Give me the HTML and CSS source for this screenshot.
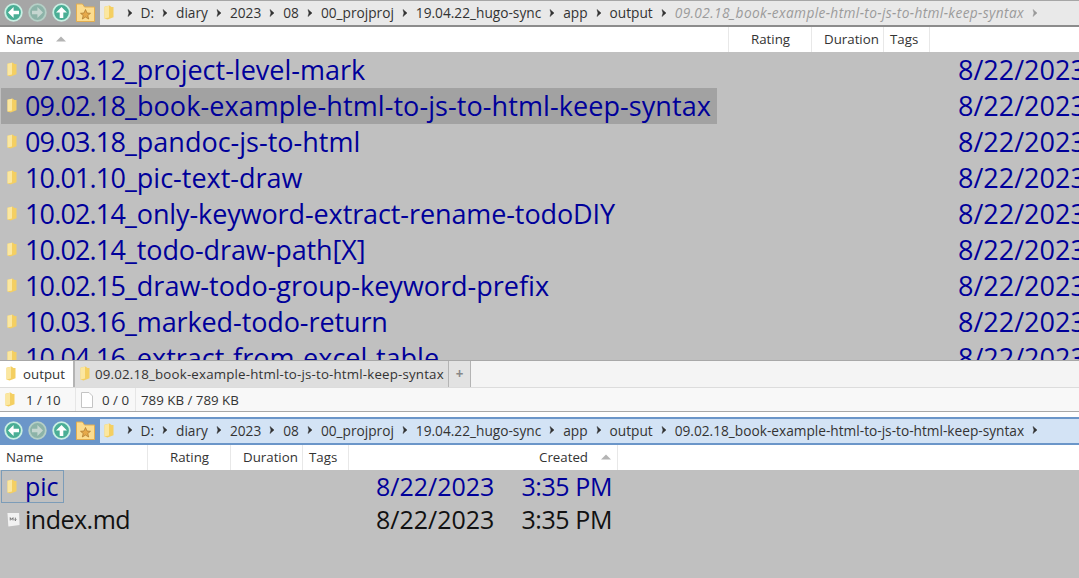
FILE: index.html
```html
<!DOCTYPE html>
<html lang="en">
<head>
<meta charset="utf-8">
<title>Explorer</title>
<link rel="stylesheet" href="styles.css">
</head>
<body>
<svg class="defs" width="0" height="0" aria-hidden="true">
  <defs>
    <symbol id="folder" viewBox="0 0 10 15">
      <path d="M.5 1.8 L5.5 .6 L7.5 2 L9.5 2 L9.5 12.2 L3.5 14.6 L.5 13.4 Z" fill="#f4cf62"/>
      <path d="M.5 1.8 L5 .8 L5 12.6 L.5 13.4 Z" fill="#fbe7a0"/>
    </symbol>
    <symbol id="arrow-left" viewBox="0 0 19 19">
      <circle cx="9.5" cy="9.5" r="8.3" fill="#4aae95" stroke="#c9efe3" stroke-width="1.8"/>
      <path d="M15 7.7 H9.6 V4 L4 9.5 L9.6 15 V11.3 H15 Z" fill="#fff"/>
    </symbol>
    <symbol id="arrow-right" viewBox="0 0 19 19">
      <circle cx="9.5" cy="9.5" r="8.3" fill="#8cb3a8" stroke="#b5cfc6" stroke-width="1.8"/>
      <path d="M4 7.7 H9.4 V4 L15 9.5 L9.4 15 V11.3 H4 Z" fill="#c5d6d0"/>
    </symbol>
    <symbol id="arrow-up" viewBox="0 0 19 19">
      <circle cx="9.5" cy="9.5" r="8.3" fill="#4aae95" stroke="#c9efe3" stroke-width="1.8"/>
      <path d="M7.7 15 V9.6 H4 L9.5 4 L15 9.6 H11.3 V15 Z" fill="#fff"/>
    </symbol>
    <symbol id="fav" viewBox="0 0 19 19">
      <path d="M.5 1 H6.5 L8.5 4 H18.5 V18.5 H.5 Z" fill="#fcdc8e" stroke="#e2ad50"/>
      <path d="M9.5 6.5 L11 10 L14.5 10.3 L11.8 12.5 L12.7 16 L9.5 14.1 L6.3 16 L7.2 12.5 L4.5 10.3 L8 10 Z" fill="#e6a94a" stroke="#a9762c" stroke-width=".7"/>
    </symbol>
    <symbol id="sep" viewBox="0 0 8 10">
      <path d="M2 1.5 L6 5 L2 8.5 L3 5 Z" fill="currentColor" stroke="currentColor" stroke-width=".5"/>
    </symbol>
    <symbol id="sort" viewBox="0 0 10 6">
      <path d="M0 5.5 L5 .5 L10 5.5 Z" fill="#b4b4b4"/>
    </symbol>
    <symbol id="doc" viewBox="0 0 12 16">
      <path d="M.5 .5 H8 L11.5 4 V15.5 H.5 Z" fill="#fff" stroke="#c4c4c4"/>
    </symbol>
    <symbol id="md" viewBox="0 0 14 16">
      <path d="M.5 1 H13 L13.5 14 L1.5 15.5 Z" fill="#f2f2f2"/>
      <path d="M3.5 9 V6 L5 8 L6.5 6 V9 M9 6 V9 M7.8 8 L9 9.2 L10.2 8" fill="none" stroke="#666" stroke-width=".9"/>
    </symbol>
  </defs>
</svg>

<section class="pane">
  <div class="toolbar toolbar-inactive">
    <div class="nav">
      <svg class="nav-icon"><use href="#arrow-left"/></svg>
      <svg class="nav-icon"><use href="#arrow-right"/></svg>
      <svg class="nav-icon"><use href="#arrow-up"/></svg>
      <svg class="fav-icon"><use href="#fav"/></svg>
    </div>
    <div class="crumbs crumbs-inactive">
      <svg class="crumb-folder"><use href="#folder"/></svg>
      <svg class="sep"><use href="#sep"/></svg><span>D:</span>
      <svg class="sep"><use href="#sep"/></svg><span>diary</span>
      <svg class="sep"><use href="#sep"/></svg><span>2023</span>
      <svg class="sep"><use href="#sep"/></svg><span>08</span>
      <svg class="sep"><use href="#sep"/></svg><span>00_projproj</span>
      <svg class="sep"><use href="#sep"/></svg><span>19.04.22_hugo-sync</span>
      <svg class="sep"><use href="#sep"/></svg><span>app</span>
      <svg class="sep"><use href="#sep"/></svg><span>output</span>
      <svg class="sep"><use href="#sep"/></svg><span class="crumb-ghost">09.02.18_book-example-html-to-js-to-html-keep-syntax</span>
      <svg class="sep sep-ghost"><use href="#sep"/></svg>
    </div>
  </div>

  <div class="header header-top">
    <div class="hcell hcell-name-top"><span>Name</span><svg class="sort"><use href="#sort"/></svg></div>
    <div class="hcell hcell-rating-top">Rating</div>
    <div class="hcell hcell-duration-top">Duration</div>
    <div class="hcell hcell-tags-top">Tags</div>
  </div>

  <div class="list list-top">
    <div class="row"><div class="name"><svg class="row-icon"><use href="#folder"/></svg><span class="label"><span class="num">07.03.12</span>_project-level-mark</span></div><div class="date">8/22/2023</div></div>
    <div class="row"><div class="name name-selected"><svg class="row-icon"><use href="#folder"/></svg><span class="label label-loose"><span class="num">09.02.18</span>_book-example-html-to-js-to-html-keep-syntax</span></div><div class="date">8/22/2023</div></div>
    <div class="row"><div class="name"><svg class="row-icon"><use href="#folder"/></svg><span class="label"><span class="num">09.03.18</span>_pandoc-js-to-html</span></div><div class="date">8/22/2023</div></div>
    <div class="row"><div class="name"><svg class="row-icon"><use href="#folder"/></svg><span class="label"><span class="num">10.01.10</span>_pic-text-draw</span></div><div class="date">8/22/2023</div></div>
    <div class="row"><div class="name"><svg class="row-icon"><use href="#folder"/></svg><span class="label label-tight"><span class="num">10.02.14</span>_only-keyword-extract-rename-todoDIY</span></div><div class="date">8/22/2023</div></div>
    <div class="row"><div class="name"><svg class="row-icon"><use href="#folder"/></svg><span class="label label-tight"><span class="num">10.02.14</span>_todo-draw-path[X]</span></div><div class="date">8/22/2023</div></div>
    <div class="row"><div class="name"><svg class="row-icon"><use href="#folder"/></svg><span class="label"><span class="num">10.02.15</span>_draw-todo-group-keyword-prefix</span></div><div class="date">8/22/2023</div></div>
    <div class="row"><div class="name"><svg class="row-icon"><use href="#folder"/></svg><span class="label label-tight"><span class="num">10.03.16</span>_marked-todo-return</span></div><div class="date">8/22/2023</div></div>
    <div class="row"><div class="name"><svg class="row-icon"><use href="#folder"/></svg><span class="label"><span class="num">10.04.16</span>_extract-from-excel-table</span></div><div class="date">8/22/2023</div></div>
  </div>

  <div class="tabs">
    <div class="tab tab-active"><svg class="tab-icon"><use href="#folder"/></svg><span>output</span></div>
    <div class="tab tab-path"><svg class="tab-icon"><use href="#folder"/></svg><span>09.02.18_book-example-html-to-js-to-html-keep-syntax</span></div>
    <div class="tab tab-add">+</div>
  </div>

  <div class="status">
    <div class="stat stat-folders"><svg class="tab-icon"><use href="#folder"/></svg><span>1 / 10</span></div>
    <div class="stat stat-files"><svg class="doc-icon"><use href="#doc"/></svg><span>0 / 0</span></div>
    <div class="stat">789 KB / 789 KB</div>
  </div>
</section>

<section class="pane pane-bottom">
  <div class="toolbar toolbar-active">
    <div class="nav">
      <svg class="nav-icon"><use href="#arrow-left"/></svg>
      <svg class="nav-icon"><use href="#arrow-right"/></svg>
      <svg class="nav-icon"><use href="#arrow-up"/></svg>
      <svg class="fav-icon"><use href="#fav"/></svg>
    </div>
    <div class="crumbs crumbs-active">
      <svg class="crumb-folder"><use href="#folder"/></svg>
      <svg class="sep"><use href="#sep"/></svg><span>D:</span>
      <svg class="sep"><use href="#sep"/></svg><span>diary</span>
      <svg class="sep"><use href="#sep"/></svg><span>2023</span>
      <svg class="sep"><use href="#sep"/></svg><span>08</span>
      <svg class="sep"><use href="#sep"/></svg><span>00_projproj</span>
      <svg class="sep"><use href="#sep"/></svg><span>19.04.22_hugo-sync</span>
      <svg class="sep"><use href="#sep"/></svg><span>app</span>
      <svg class="sep"><use href="#sep"/></svg><span>output</span>
      <svg class="sep"><use href="#sep"/></svg><span>09.02.18_book-example-html-to-js-to-html-keep-syntax</span>
      <svg class="sep"><use href="#sep"/></svg>
    </div>
  </div>

  <div class="header header-bottom">
    <div class="hcell hcell-name-bottom">Name</div>
    <div class="hcell hcell-rating-bottom">Rating</div>
    <div class="hcell hcell-duration-bottom">Duration</div>
    <div class="hcell hcell-tags-bottom">Tags</div>
    <div class="hcell hcell-created"><span>Created</span><svg class="sort"><use href="#sort"/></svg></div>
  </div>

  <div class="list list-bottom">
    <div class="row row-bottom"><div class="name name-focus"><svg class="row-icon"><use href="#folder"/></svg><span class="label">pic</span></div><div class="created"><span>8/22/2023</span><span class="time">3:35 PM</span></div></div>
    <div class="row row-bottom row-file"><div class="name"><svg class="row-icon row-icon-md"><use href="#md"/></svg><span class="label label-file">index.md</span></div><div class="created"><span>8/22/2023</span><span class="time">3:35 PM</span></div></div>
  </div>
</section>
</body>
</html>
```

FILE: styles.css
```css
* { box-sizing: border-box; }
html, body { margin: 0; padding: 0; }
body {
  width: 1079px;
  height: 578px;
  overflow: hidden;
  background: #c0c0c0;
  font-family: "Open Sans", "Noto Sans", "Liberation Sans", sans-serif;
  font-size: 13.3px;
  color: #333;
  display: flex;
  flex-direction: column;
}
.defs { position: absolute; }
.pane { display: flex; flex-direction: column; height: 412px; flex: none; }
.pane-bottom { flex: 1; height: auto; min-height: 0; background: #fff; padding-top: 5px; }

.toolbar { display: flex; height: 27px; flex: none; }
.toolbar-inactive { background: #a6a6a6; border-bottom: 2px solid #8c8c8c; padding-top: 1px; }
.toolbar-active { height: 28px; padding: 2px 0; background: #6b96c9; }
.nav { width: 100px; flex: none; display: flex; align-items: center; padding-left: 4px; gap: 5px; margin-top: -1px; }
.toolbar-active .nav { margin-top: -2px; }
.nav-icon { width: 19px; height: 19px; flex: none; }
.fav-icon { width: 19px; height: 19px; flex: none; }
.crumbs { flex: 1; min-width: 0; display: flex; align-items: center; white-space: nowrap; overflow: hidden; padding: 0 0 1px 4px; color: #333; font-size: 13.7px; }
.crumbs-inactive { background: #e9e9e9; }
.crumbs-active { background: #d3e3f5; padding-bottom: 2px; }
.crumb-folder { width: 10px; height: 15px; flex: none; margin-right: 4.5px; }
.sep { width: 8px; height: 10px; flex: none; margin: 0 7px; color: #333; }
.crumb-ghost { color: #9b9b9b; font-style: italic; letter-spacing: .38px; }
.sep-ghost { color: #999; }

.header { display: flex; background: #fff; flex: none; height: 25px; }
.hcell { display: flex; align-items: center; border-right: 1px solid #e8e8e8; height: 100%; padding-bottom: 1px; color: #333; white-space: nowrap; }
.hcell-name-top { width: 729px; padding-left: 6px; }
.sort { width: 10px; height: 6px; margin-left: 13px; }
.hcell-rating-top { width: 83px; padding-left: 22px; }
.hcell-duration-top { width: 72px; padding-left: 12px; }
.hcell-tags-top { width: 46px; padding-left: 6px; }
.hcell-name-bottom { width: 148px; padding-left: 6px; }
.hcell-rating-bottom { width: 83px; padding-left: 22px; }
.hcell-duration-bottom { width: 72px; padding-left: 12px; }
.hcell-tags-bottom { width: 46px; padding-left: 6px; }
.hcell-created { width: 269px; padding-left: 190px; }

.list { background: #c0c0c0; overflow: hidden; font-size: 27px; }
.list-top { height: 308px; flex: none; }
.list-bottom { flex: 1; min-height: 0; font-size: 25px; }
.row { display: flex; height: 36px; flex: none; color: #00009a; white-space: nowrap; position: relative; }
.row-bottom { height: 33px; }
.row-file { color: #111; }
.name { display: flex; align-items: center; padding: 0 6px; margin-left: 1px; height: 36px; }
.row-bottom .name { height: 33px; }
.name-selected { background: #a2a2a2; width: 716px; flex: none; }
.name-focus { border: 1px solid #7c9cb8; padding: 0 0 0 5px; width: 63px; flex: none; }
.label { margin-top: -2px; }
.label-loose { letter-spacing: .08px; }
.label-tight { letter-spacing: -.1px; }
.label-file { letter-spacing: -.5px; }
.num { letter-spacing: -.85px; }
.row-icon { width: 10px; height: 15px; flex: none; margin-right: 8px; margin-top: -1px; }
.row-icon-md { width: 13px; margin-right: 5px; }
.date { position: absolute; left: 958px; top: 0; line-height: 35px; }
.created { position: absolute; left: 376px; top: 0; display: flex; gap: 27px; line-height: 33px; }
.time { letter-spacing: -.4px; }

.tabs { display: flex; height: 28px; flex: none; background: #f4f4f4; border-top: 1px solid #a8a8a8; border-bottom: 1px solid #dcdcdc; }
.tab { display: flex; align-items: center; background: #dedede; border-right: 1px solid #b4b4b4; color: #333; white-space: nowrap; padding-bottom: 1px; }
.tab-active { background: #fff; width: 75px; padding-left: 6px; border-right: 2px solid #b4b4b4; }
.tab-active .tab-icon { margin-right: 7px; }
.tab-path { width: 374px; padding-left: 5px; letter-spacing: .18px; }
.tab-add { width: 22px; justify-content: center; color: #888; font-weight: 700; background: #e2e2e2; }
.tab-icon { width: 10px; height: 15px; flex: none; margin-right: 5px; }

.status { display: flex; height: 24px; flex: none; background: #f8f8f8; align-items: center; border-bottom: 1px solid #a8a8a8; }
.stat { display: flex; align-items: center; padding-left: 5px; height: 100%; color: #333; white-space: nowrap; }
.stat-folders { width: 76px; border-right: 1px solid #e6e6e6; }
.stat-folders .tab-icon { margin-right: 11px; }
.stat-files { width: 60px; border-right: 1px solid #e6e6e6; }
.doc-icon { width: 12px; height: 16px; margin-right: 9px; }
```
